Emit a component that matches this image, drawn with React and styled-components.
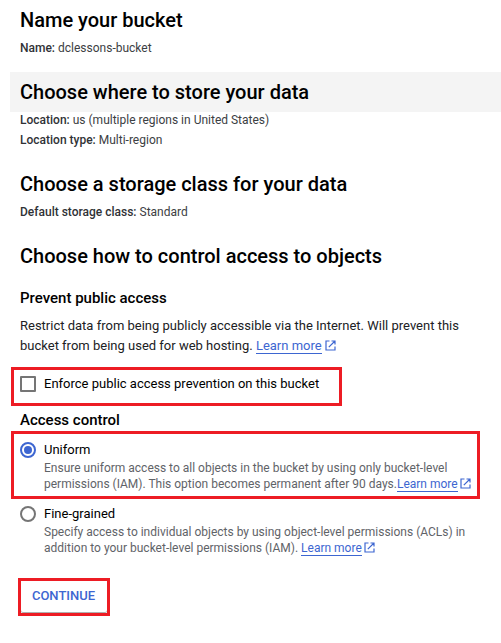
import React from 'react'
import styled, { createGlobalStyle } from 'styled-components'

const blue = '#3d66d1'

const GlobalStyle = createGlobalStyle`
	* {
		box-sizing: border-box;
	}
	body {
		margin: 0;
		background: #fff;
		color: #202124;
		font-family: Roboto, 'Liberation Sans', sans-serif;
		overflow: hidden;
	}
`

const Page = styled.main`
	display: flex;
	flex-direction: column;
	padding-left: 10px;
	height: 643px;
`

const StepTitle = styled.h2`
	margin: 0;
	padding-left: 10px;
	height: 40px;
	line-height: 40px;
	font-size: 20px;
	font-weight: 500;
	color: #000;
	background: ${props => (props.$active ? '#f4f4f4' : 'transparent')};
`

const Details = styled.div`
	margin: -2px 0 14px;
	padding-left: 10px;
	font-size: 12px;
	line-height: 20px;
	color: #3c4043;
`

const Label = styled.span`
	font-weight: 500;
	color: #303236;
`

const SectionTitle = styled.h3`
	margin: ${props => props.$margin};
	padding-left: 10px;
	font-size: 15px;
	font-weight: 500;
	line-height: 20px;
	color: #000;
`

const Paragraph = styled.p`
	margin: 0 0 11px;
	padding-left: 10px;
	font-size: 13px;
	line-height: 20px;
	white-space: nowrap;
`

const Link = styled.a`
	display: inline-block;
	height: ${props => (props.$tall ? '18px' : '16px')};
	line-height: ${props => (props.$tall ? '20px' : '16px')};
	color: ${blue};
	border-bottom: 1px solid ${blue};
	vertical-align: top;
`

const LinkIcon = styled.svg`
	width: 11px;
	height: 11px;
	margin-left: ${props => (props.$tall ? '3px' : '2px')};
	vertical-align: -1px;
	fill: none;
	stroke: ${blue};
	stroke-width: 1.2;
`

const Highlight = styled.div`
	border: 3px solid #ed1c24;
	width: ${props => props.$w}px;
	height: ${props => props.$h}px;
	margin-left: ${props => props.$left || 1}px;
	flex: none;
`

const Option = styled.label`
	display: flex;
	gap: 8px;
	padding: ${props => props.$pad};
	font-size: 13px;
	line-height: 16px;
	color: #000;
	white-space: nowrap;
`

const Checkbox = styled.span`
	width: 16px;
	height: 16px;
	border: 2px solid #757575;
	border-radius: 1px;
	flex: none;
`

const Radio = styled.span`
	display: grid;
	place-items: center;
	width: 16px;
	height: 16px;
	border: 2px solid ${props => (props.$checked ? blue : '#757575')};
	border-radius: 50%;
	flex: none;

	&::after {
		content: '';
		width: 8px;
		height: 8px;
		border-radius: 50%;
		background: ${props => (props.$checked ? blue : 'transparent')};
	}
`

const Hint = styled.div`
	margin-top: 2px;
	font-size: 12px;
	line-height: 16px;
	color: #5f6368;
`

const ContinueButton = styled.button`
	display: block;
	width: 86px;
	height: 32px;
	padding: 0 1px 3px 0;
	border: 0;
	border-radius: 2px;
	background: #fff;
	color: ${blue};
	font: 500 13px/16px Roboto, sans-serif;
	box-shadow: inset 0 -1px 0 #b0b0b0;
`

const LearnMore = ({ tall }) => (
	<>
		<Link $tall={tall}>Learn more</Link>
		<LinkIcon $tall={tall} viewBox="0 0 11 11">
			<path d="M4.5 1H1v9h9V6.5M6.5 1H10v3.5M10 1L3.8 7.2" />
		</LinkIcon>
	</>
)

const RadioOption = ({ title, checked, pad, children }) => (
	<Option $pad={pad}>
		<Radio $checked={checked} />
		<div>
			{title}
			<Hint>{children}</Hint>
		</div>
	</Option>
)

export default function App() {
	return (
		<>
			<GlobalStyle />
			<Page>
				<StepTitle>Name your bucket</StepTitle>
				<Details>
					<Label>Name:</Label> dclessons-bucket
				</Details>
				<StepTitle $active>Choose where to store your data</StepTitle>
				<Details>
					<Label>Location:</Label> us (multiple regions in United States)
					<br />
					<Label>Location type:</Label> Multi-region
				</Details>
				<StepTitle>Choose a storage class for your data</StepTitle>
				<Details>
					<Label>Default storage class:</Label> Standard
				</Details>
				<StepTitle>Choose how to control access to objects</StepTitle>

				<SectionTitle $margin="12px 0 8px">Prevent public access</SectionTitle>
				<Paragraph>
					Restrict data from being publicly accessible via the Internet. Will prevent this
					<br />
					bucket from being used for web hosting. <LearnMore tall />
				</Paragraph>
				<Highlight $w={331} $h={39}>
					<Option $pad="6px 0 0 6px">
						<Checkbox />
						Enforce public access prevention on this bucket
					</Option>
				</Highlight>

				<SectionTitle $margin="4px 0 1px">Access control</SectionTitle>
				<Highlight $w={469} $h={68}>
					<RadioOption title="Uniform" checked pad="8px 0 0 6px">
						Ensure uniform access to all objects in the bucket by using only bucket-level
						<br />
						permissions (IAM). This option becomes permanent after 90 days.
						<LearnMore />
					</RadioOption>
				</Highlight>
				<RadioOption title="Fine-grained" pad="7px 0 22px 10px">
					Specify access to individual objects by using object-level permissions (ACLs) in
					<br />
					addition to your bucket-level permissions (IAM). <LearnMore />
				</RadioOption>

				<Highlight $w={92} $h={38} $left={8}>
					<ContinueButton>CONTINUE</ContinueButton>
				</Highlight>
			</Page>
		</>
	)
}
